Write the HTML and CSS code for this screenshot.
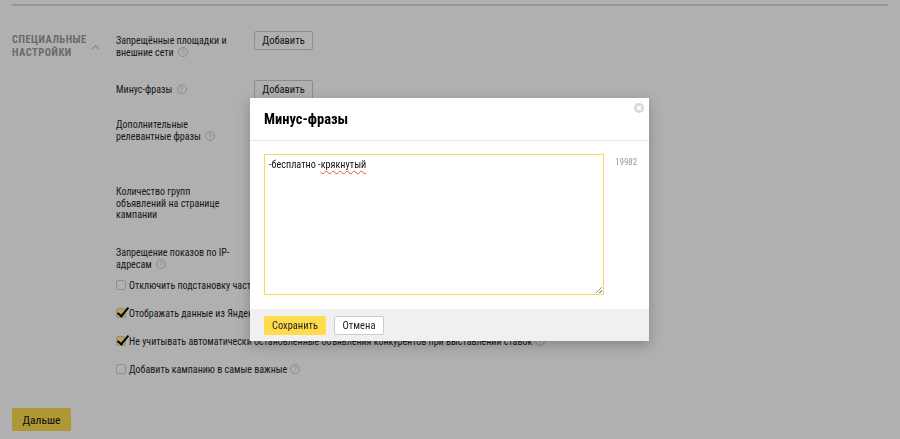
FILE: index.html
```html
<!DOCTYPE html>
<html lang="ru">
<head>
<meta charset="utf-8">
<title>Минус-фразы</title>
<link rel="stylesheet" href="styles.css">
</head>
<body>
<div class="page">
  <div class="rule"></div>
  <section class="section">
    <div class="section-title">
      <span>Специальные<br>настройки</span>
      <span class="caret"></span>
    </div>
    <div class="fields">
      <div class="row row-1">
        <div class="label">Запрещённые площадки и<br>внешние сети <span class="q">?</span></div>
        <button class="btn">Добавить</button>
      </div>
      <div class="row row-2">
        <div class="label">Минус-фразы <span class="q">?</span></div>
        <button class="btn">Добавить</button>
      </div>
      <div class="row row-3">
        <div class="label">Дополнительные<br>релевантные фразы <span class="q">?</span></div>
      </div>
      <div class="row row-4">
        <div class="label">Количество групп<br>объявлений на странице<br>кампании</div>
      </div>
      <div class="row row-5">
        <div class="label">Запрещение показов по IP-<br>адресам <span class="q">?</span></div>
      </div>
      <div class="checks">
        <label class="check"><span class="box"></span>Отключить подстановку части поискового запроса</label>
        <label class="check"><span class="box on"></span>Отображать данные из Яндекс.Справочника</label>
        <label class="check"><span class="box on"></span>Не учитывать автоматически остановленные объявления конкурентов при выставлении ставок <span class="q">?</span></label>
        <label class="check"><span class="box"></span>Добавить кампанию в самые важные <span class="q">?</span></label>
      </div>
    </div>
  </section>
  <div class="footer">
    <button class="btn-next">Дальше</button>
  </div>
</div>

<div class="overlay"></div>

<div class="modal">
  <div class="modal-head">
    <h2 class="modal-title">Минус-фразы</h2>
    <span class="close"></span>
  </div>
  <div class="modal-body">
    <div class="textarea">-бесплатно -<span class="misspell">крякнутый</span><span class="grip"></span></div>
    <div class="counter">19982</div>
  </div>
  <div class="modal-foot">
    <button class="btn-save">Сохранить</button>
    <button class="btn-cancel">Отмена</button>
  </div>
</div>
</body>
</html>
```

FILE: styles.css
```css
* { box-sizing: border-box; }
html, body { margin: 0; padding: 0; }
body {
  width: 900px;
  height: 439px;
  overflow: hidden;
  background: #fff;
  font-family: "Roboto Condensed", "Liberation Sans", Arial, sans-serif;
  font-size: 10px;
  color: #262626;
}
.page { padding: 4px 12px 0 12px; }
.rule { height: 2px; background: #dadada; width: 876px; }

.section { display: flex; padding-top: 25px; }
.section-title {
  width: 104px;
  flex: none;
  display: flex;
  align-items: flex-start;
  padding-top: 2px;
  font-weight: bold;
  text-transform: uppercase;
  color: #9a9a9a;
  font-size: 10.5px;
  line-height: 13px;
  letter-spacing: 0.5px;
}
.caret {
  width: 5px; height: 5px;
  border-left: 1px solid #bbb; border-top: 1px solid #bbb;
  transform: rotate(45deg);
  margin: 13px 0 0 6px;
}
.fields { flex: 1; }
.row { display: flex; align-items: flex-start; }
.label { width: 138px; flex: none; line-height: 11.5px; padding-top: 4px; }
.row-1 { height: 49px; }
.row-2 { height: 33px; }
.row-3 { height: 67px; padding-top: 2px; }
.row-4 { height: 63px; padding-top: 2px; }
.row-5 { height: 34px; }

.q {
  display: inline-block;
  overflow: hidden;
  width: 10px; height: 10px;
  border: 1px solid #c8c8c8;
  border-radius: 50%;
  color: #c0c0c0;
  font-family: "Liberation Sans", Arial, sans-serif;
  font-size: 7px;
  line-height: 8px;
  text-align: center;
  vertical-align: -1px;
  margin-left: 2px;
}

.btn {
  font-family: inherit;
  font-size: 10.5px;
  height: 19px;
  width: 59px;
  padding: 0;
  background: #fff;
  border: 1px solid #ccc;
  border-radius: 2px;
  color: #222;
}

.checks { display: flex; flex-direction: column; gap: 16px; padding-top: 2px; }
.check { display: flex; align-items: center; height: 12px; white-space: nowrap; font-size: 10px; }
.box {
  position: relative;
  width: 10px; height: 10px;
  border: 1px solid #d0d0d0;
  border-radius: 2px;
  background: #fff;
  margin-right: 3px;
  flex: none;
}
.box.on { background: #ffeaa0; border-color: #e0cf90; }
.box.on::after {
  content: "";
  position: absolute;
  left: 3px; top: -4px;
  width: 4px; height: 10px;
  border-right: 2px solid #000;
  border-bottom: 2px solid #000;
  transform: rotate(40deg);
}
.check .q { margin-left: 3px; }

.footer { padding-top: 33px; }
.btn-next {
  font-family: inherit;
  font-size: 11.5px;
  width: 59px; height: 23px;
  border: 0;
  border-radius: 2px;
  background: #ffdb4d;
  color: #111;
  padding: 0;
}

.overlay {
  position: fixed;
  inset: 0;
  background: rgba(0,0,0,0.31);
}

.modal {
  position: absolute;
  left: 250px; top: 98px;
  width: 399px; height: 243px;
  background: #fff;
  box-shadow: 0 4px 12px rgba(0,0,0,0.25);
  display: flex;
  flex-direction: column;
}
.modal-head {
  position: relative;
  height: 43px;
  border-bottom: 1px solid #e6e6e6;
  padding: 13px 14px 0;
}
.modal-title { margin: 0; font-size: 14.5px; line-height: 18px; font-weight: bold; color: #000; }
.close {
  position: absolute;
  right: 5px; top: 5px;
  width: 10px; height: 10px;
  border-radius: 50%;
  background: #d6d6d6;
}
.close::before, .close::after {
  content: "";
  position: absolute;
  left: 4px; top: 2px;
  width: 2px; height: 6px;
  background: #fff;
  transform: rotate(45deg);
}
.close::after { transform: rotate(-45deg); }

.modal-body { flex: 1; display: flex; padding: 13px 14px 0; gap: 11px; }
.textarea {
  position: relative;
  flex: none;
  width: 340px; height: 141px;
  border: 1px solid #f5d860;
  padding: 3px 4px;
  font-size: 10.2px;
  line-height: 13px;
  color: #111;
}
.misspell { text-decoration: underline wavy #e05050; text-decoration-thickness: 1px; text-underline-offset: 2px; }
.grip {
  position: absolute;
  right: 1px; bottom: 1px;
  width: 6px; height: 6px;
  background: linear-gradient(135deg, transparent 45%, #999 45%, #999 55%, transparent 55%, transparent 75%, #999 75%, #999 85%, transparent 85%);
}
.counter { padding-top: 3px; color: #999; font-size: 9px; }

.modal-foot {
  height: 32px;
  background: #f0f0f0;
  display: flex;
  align-items: center;
  gap: 8px;
  padding: 0 14px;
}
.btn-save, .btn-cancel {
  font-family: inherit;
  font-size: 10.5px;
  height: 19px;
  padding: 0;
  border-radius: 2px;
  color: #222;
}
.btn-save { width: 62px; background: #ffdb4d; border: 0; }
.btn-cancel { width: 50px; background: #fff; border: 1px solid #ccc; }
```
